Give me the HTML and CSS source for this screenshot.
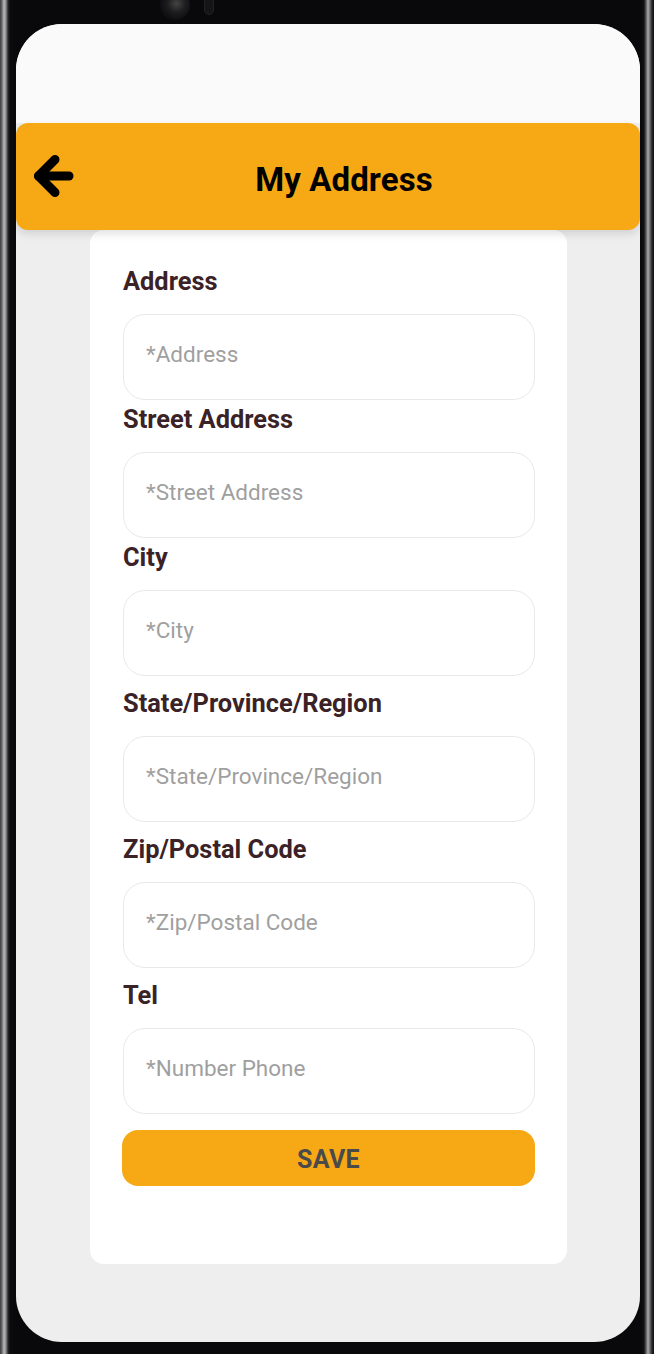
FILE: index.html
```html
<!DOCTYPE html>
<html>
<head>
<meta charset="utf-8">
<link rel="stylesheet" href="styles.css">
</head>
<body>
<div class="device">
  <div class="camera"><span class="lens"></span><span class="sensor"></span></div>
  <div class="screen">
    <div class="status"></div>
    <header class="appbar">
      <svg class="back" width="44" height="44" viewBox="32 157 44 44" aria-hidden="true">
        <polyline points="55,162.5 38.5,179 55,195.5" fill="none" stroke="#000" stroke-width="9" stroke-linecap="round" stroke-linejoin="round"/>
        <line x1="38.5" y1="179" x2="69" y2="179" stroke="#000" stroke-width="9" stroke-linecap="round"/>
      </svg>
      <h1 class="title">My Address</h1>
    </header>
    <main class="content">
      <form class="card">
        <label class="label">Address</label>
        <div class="field"><span class="ph">*Address</span></div>
        <label class="label">Street Address</label>
        <div class="field"><span class="ph">*Street Address</span></div>
        <label class="label">City</label>
        <div class="field"><span class="ph">*City</span></div>
        <label class="label wide">State/Province/Region</label>
        <div class="field"><span class="ph">*State/Province/Region</span></div>
        <label class="label wide">Zip/Postal Code</label>
        <div class="field"><span class="ph">*Zip/Postal Code</span></div>
        <label class="label wide">Tel</label>
        <div class="field"><span class="ph">*Number Phone</span></div>
        <button type="button" class="save">SAVE</button>
      </form>
    </main>
  </div>
</div>
</body>
</html>
```
FILE: styles.css
```css
* { box-sizing: border-box; }
html, body { margin: 0; padding: 0; }
body {
  width: 654px;
  height: 1354px;
  overflow: hidden;
  background: #09090b;
  font-family: Roboto, "Liberation Sans", Arial, sans-serif;
}
.device {
  width: 654px;
  height: 1354px;
  padding: 24px 14px 12px 16px;
  background: linear-gradient(90deg,
    #3a3a3c 0px, #6d6d70 2px, #b9b9bc 4px, #8a8a8d 6px, #2a2a2c 8px, #0b0b0d 10px,
    #09090b 15px, #09090b 641px, #111113 644px, #5a5a5d 646px, #a9a9ac 648px,
    #6a6a6d 650px, #262628 652px, #121214 654px);
  position: relative;
}
.camera {
  position: absolute;
  top: -10px;
  left: 160px;
  display: flex;
  gap: 14px;
  align-items: center;
}
.lens {
  width: 30px; height: 30px; border-radius: 50%;
  background: radial-gradient(circle at 55% 45%, #444 0, #1c1c1e 40%, #0f0f11 70%);
}
.sensor {
  width: 10px; height: 20px; border-radius: 5px;
  background: #151517;
  border: 1px solid #222;
}
.screen {
  width: 624px;
  height: 1318px;
  border-radius: 46px;
  overflow: hidden;
  background: #eeeeee;
  display: flex;
  flex-direction: column;
}
.status {
  height: 99px;
  background: #fafafa;
  flex: none;
}
.appbar {
  height: 107px;
  flex: none;
  background: #f7a915;
  border-radius: 12px;
  display: flex;
  align-items: center;
  padding-left: 16px;
  padding-right: 28px;
  position: relative;
  z-index: 2;
  box-shadow: 0 4px 8px rgba(0,0,0,0.12);
}
.back { flex: none; display: block; margin-top: -2px; }
.title {
  flex: 1;
  margin: 5px 0 0;
  text-align: center;
  font-size: 33px;
  font-weight: 700;
  color: #000;
  letter-spacing: 0.1px;
}
.content {
  flex: 1;
  display: flex;
  justify-content: center;
  padding-left: 1px;
}
.card {
  width: 477px;
  height: 1034px;
  background: #fff;
  border-radius: 14px;
  padding: 37px 32px 0 33px;
  display: flex;
  flex-direction: column;
  margin: 0;
  position: relative;
  z-index: 1;
}
.label {
  font-size: 25.4px;
  line-height: 28px;
  font-weight: 700;
  color: #3a2226;
  margin: 5px 0 19px;
}
.label:first-child { margin-top: 0; }
.label.wide { margin-top: 13px; }
.field {
  height: 86px;
  border: 1.5px solid #e9e9e9;
  border-radius: 22px;
  display: flex;
  align-items: center;
  padding-left: 22px;
  padding-bottom: 7px;
}
.ph {
  font-size: 22.5px;
  color: #9f9f9f;
}
.save {
  margin-top: 16px;
  height: 56px;
  width: 413px;
  margin-left: -1px;
  border: none;
  border-radius: 16px;
  background: #f7a915;
  color: #4a4a4a;
  font-family: Roboto, "Liberation Sans", Arial, sans-serif;
  font-size: 25px;
  font-weight: 700;
  letter-spacing: 0.3px;
  padding-top: 4px;
}
```
